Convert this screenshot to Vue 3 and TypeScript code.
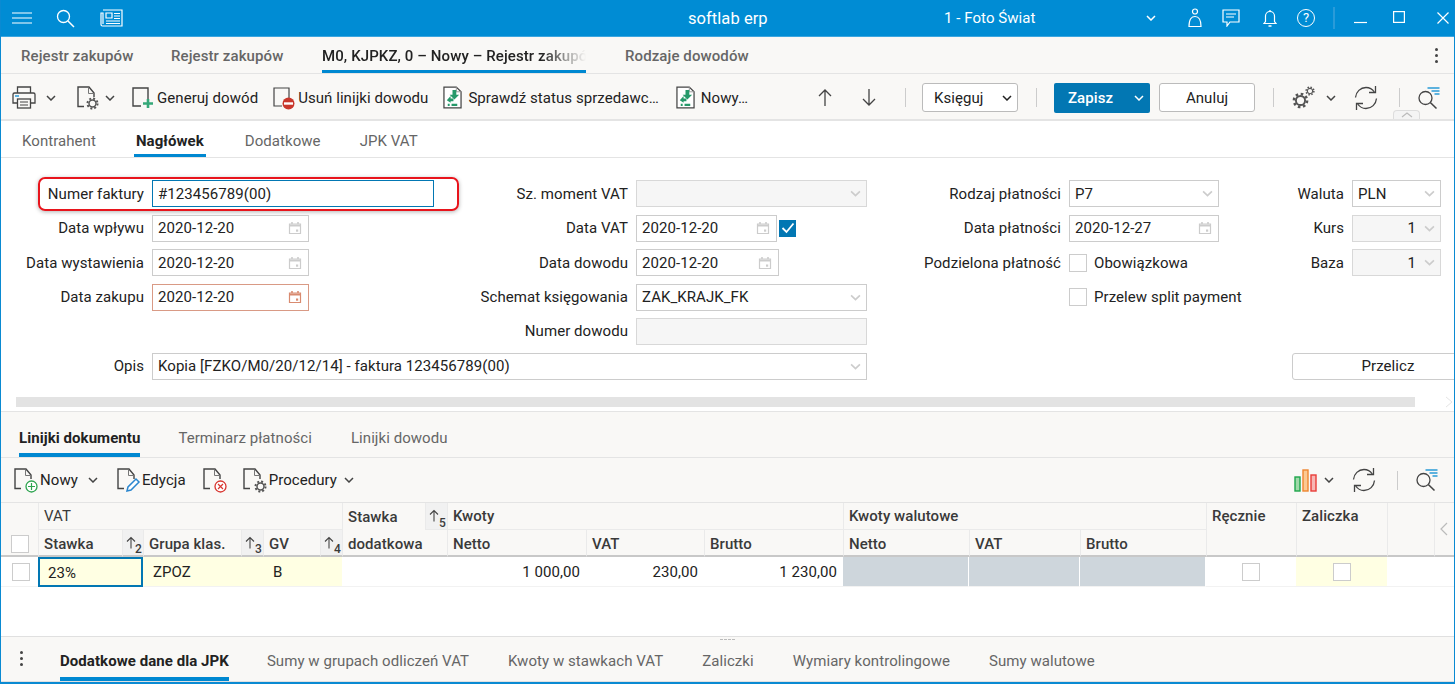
<script setup lang="ts">
interface Field { label?: string; kind: string; value?: string; r: number; c: number; extra?: string }
const fields: Field[] = [
  { label: 'Numer faktury', kind: 'focus', value: '#123456789(00)', r: 1, c: 1 },
  { label: 'Data wpływu', kind: 'date', value: '2020-12-20', r: 2, c: 1, extra: 'w157' },
  { label: 'Data wystawienia', kind: 'date', value: '2020-12-20', r: 3, c: 1, extra: 'w157' },
  { label: 'Data zakupu', kind: 'date', value: '2020-12-20', r: 4, c: 1, extra: 'w157 err' },
  { label: 'Opis', kind: 'sel', value: 'Kopia [FZKO/M0/20/12/14] - faktura 123456789(00)', r: 6, c: 1, extra: 'wide' },
  { label: 'Sz. moment VAT', kind: 'sel', value: '', r: 1, c: 3, extra: 'dis' },
  { label: 'Data dowodu', kind: 'date', value: '2020-12-20', r: 3, c: 3, extra: 'w143' },
  { label: 'Schemat księgowania', kind: 'sel', value: 'ZAK_KRAJK_FK', r: 4, c: 3 },
  { label: 'Numer dowodu', kind: 'text', value: '', r: 5, c: 3, extra: 'dis' },
  { label: 'Rodzaj płatności', kind: 'sel', value: 'P7', r: 1, c: 5 },
  { label: 'Data płatności', kind: 'date', value: '2020-12-27', r: 2, c: 5 },
  { label: 'Waluta', kind: 'sel', value: 'PLN', r: 1, c: 7 },
  { label: 'Kurs', kind: 'sel', value: '1', r: 2, c: 7, extra: 'dis num' },
  { label: 'Baza', kind: 'sel', value: '1', r: 3, c: 7, extra: 'dis num' },
]
const bottomTabs = ['Sumy w grupach odliczeń VAT', 'Kwoty w stawkach VAT', 'Zaliczki', 'Wymiary kontrolingowe', 'Sumy walutowe']
</script>

<template>
  <svg class="defs" aria-hidden="true">
    <symbol id="cal" viewBox="0 0 14 14">
      <path d="M1.500 3h11v9.500h-11z" fill="none" stroke="currentColor" stroke-width="1.200" />
      <path d="M1.500 4.500h11" stroke="currentColor" stroke-width="2" />
      <path d="M4 1v2M10 1v2" stroke="currentColor" stroke-width="1.600" />
      <rect x="8" y="8.500" width="2.200" height="2.200" fill="currentColor" />
    </symbol>
    <symbol id="chev" viewBox="0 0 10 6">
      <path d="M1 1l4 4 4-4" fill="none" stroke="currentColor" stroke-width="1.500" />
    </symbol>
    <symbol id="doc" viewBox="0 0 22 24">
      <path d="M7 20.500H1V1h11l5 6v4" fill="none" stroke="#444" stroke-width="1.400" />
      <path d="M11.500 1.500V7.500H17" fill="none" stroke="#777" stroke-width="1" />
    </symbol>
    <symbol id="gear" viewBox="0 0 16 16">
      <circle cx="8" cy="8" r="6.200" fill="none" stroke="#555" stroke-width="2.400" stroke-dasharray="2.430 2.440" />
      <circle cx="8" cy="8" r="4.300" fill="none" stroke="#555" stroke-width="1.800" />
    </symbol>
    <symbol id="reload" viewBox="0 0 24 24">
      <path d="M1.500 11.500C2 5.800 6.400 1.500 12 1.500c3.400 0 6.300 1.500 8.300 4.500" fill="none" stroke="#444" stroke-width="1.300" />
      <path d="M21.500 0v6.500H15" fill="none" stroke="#444" stroke-width="1.300" />
      <path d="M22.500 12.500c-.5 5.700-4.900 10-10.500 10-3.400 0-6.300-1.500-8.300-4.500" fill="none" stroke="#444" stroke-width="1.300" />
      <path d="M2.500 24v-6.500H9" fill="none" stroke="#444" stroke-width="1.300" />
    </symbol>
    <symbol id="find" viewBox="0 0 24 24">
      <circle cx="8.500" cy="12" r="6.500" fill="none" stroke="#444" stroke-width="1.300" />
      <path d="M13.300 16.500L19.500 22.500" stroke="#444" stroke-width="1.600" />
      <path d="M10.500 2h12M14.500 5h8M17.500 8h5" stroke="#2a9ad6" stroke-width="1.300" />
    </symbol>
    <symbol id="xferdoc" viewBox="0 0 20 24">
      <path d="M1 1h13l5 5v17H1z" fill="#fff" stroke="#444" stroke-width="1.300" />
      <path d="M14 1v5h5" fill="none" stroke="#999" />
      <path d="M10 4h4v5h3l-5 5-5-5h3z" fill="#26996a" />
      <path d="M4 15l4-4.500V13h3v3H8v1.500zM5 18.500h2v2.500H5zM9 18.500h6v2.500H9z" fill="#26996a" />
    </symbol>
    <symbol id="sort" viewBox="0 0 14 14">
      <path d="M5 12.500V1.500M1 5.500l4-4 4 4" fill="none" stroke="#444" stroke-width="1.100" />
    </symbol>
  </svg>

  <div class="window">
    <header class="title">
      <svg class="t-menu" width="20" height="12" viewBox="0 0 20 12"><path d="M0 1h20M0 6h20M0 11h20" stroke="#fff" stroke-width="1.200" /></svg>
      <svg class="t-search" width="19" height="19" viewBox="0 0 19 19"><circle cx="7.500" cy="7.500" r="6" fill="none" stroke="#fff" stroke-width="1.300" /><path d="M12 12l6 6" stroke="#fff" stroke-width="1.500" /></svg>
      <svg class="t-news" width="23" height="18" viewBox="0 0 23 18"><path d="M3 1h19v16H2.500A1.500 1.500 0 0 1 1 15.500V4h2v11" fill="none" stroke="#fff" stroke-width="1.200" /><path d="M6 4h6v5H6zM14 4.500h6M14 7h6M14 9.500h6M6 12h14M6 14.500h14" fill="none" stroke="#fff" stroke-width="1.200" /></svg>
      <span class="app">softlab erp</span>
      <span class="org">1 - Foto Świat</span>
      <svg class="t-chev" width="10" height="6"><use href="#chev" /></svg>
      <svg class="t-user" width="14" height="20" viewBox="0 0 14 20"><circle cx="7" cy="3.500" r="2.500" fill="none" stroke="#fff" stroke-width="1.200" /><path d="M1 18.500c0-8 3-10 6-10s6 2 6 10z" fill="none" stroke="#fff" stroke-width="1.200" /></svg>
      <svg class="t-chat" width="18" height="18" viewBox="0 0 18 18"><path d="M1 1h16v12H8l-3 4v-4H1z" fill="none" stroke="#fff" stroke-width="1.200" /><path d="M4 5h10M4 8h8" stroke="#fff" stroke-width="1.100" /></svg>
      <svg class="t-bell" width="14" height="18" viewBox="0 0 14 18"><path d="M1 14.500h12l-1.500-2V7a4.500 4.500 0 0 0-9 0v5.500z" fill="none" stroke="#fff" stroke-width="1.200" /><path d="M7 1v1.500M5.500 17h3" stroke="#fff" stroke-width="1.300" /></svg>
      <span class="t-help">?</span>
      <i class="t-sep"></i>
      <svg class="t-min" width="13" height="12" viewBox="0 0 13 12"><path d="M0 10.500h13" stroke="#fff" stroke-width="1.200" /></svg>
      <svg class="t-max" width="12" height="12" viewBox="0 0 12 12"><rect x=".6" y=".6" width="10.800" height="10.800" fill="none" stroke="#fff" stroke-width="1.200" /></svg>
      <svg class="t-close" width="12" height="12" viewBox="0 0 12 12"><path d="M.5.500l11 11M11.500.500l-11 11" stroke="#fff" stroke-width="1.200" /></svg>
    </header>

    <nav class="doc-tabs">
      <a class="dt w1">Rejestr zakupów</a>
      <a class="dt w2">Rejestr zakupów</a>
      <a class="dt active"><span class="fade">M0, KJPKZ, 0 – Nowy – Rejestr zakupów</span></a>
      <a class="dt w4">Rodzaje dowodów</a>
      <span class="kebab"><i></i><i></i><i></i></span>
    </nav>

    <section class="toolbar">
      <svg class="i-print" width="24" height="23" viewBox="0 0 24 23"><path d="M5.500 7V1h13v6M5.500 17H1V8.500A1.500 1.500 0 0 1 2.500 7h19A1.500 1.500 0 0 1 23 8.500V17h-4.500" fill="none" stroke="#444" stroke-width="1.300" /><rect x="5.500" y="13" width="13" height="9" fill="none" stroke="#444" stroke-width="1.300" /><path d="M8 16h8M8 19h8" stroke="#444" /><path d="M3 10h4" stroke="#2a9ad6" stroke-width="1.500" /></svg>
      <svg class="chv cv1" width="10" height="6"><use href="#chev" /></svg>
      <span class="i-docgear"><svg width="22" height="24"><use href="#doc" /></svg><svg class="ov-gear" width="13" height="13"><use href="#gear" /></svg></span>
      <svg class="chv cv2" width="10" height="6"><use href="#chev" /></svg>
      <button class="tb b-gen"><svg width="22" height="24" viewBox="0 0 22 24"><path d="M9 20H1V2h15v11" fill="none" stroke="#444" stroke-width="1.400" /><path d="M16 13v9M11 17.500h10" stroke="#35a878" stroke-width="2.600" /></svg>Generuj dowód</button>
      <button class="tb b-del"><svg width="22" height="24" viewBox="0 0 22 24"><path d="M9 20H1V2h15v10" fill="none" stroke="#444" stroke-width="1.200" /><circle cx="15.500" cy="17.500" r="6" fill="#c9372c" /><path d="M11 17.500h9" stroke="#fff" stroke-width="2.400" /></svg>Usuń linijki dowodu</button>
      <button class="tb b-chk"><svg width="19" height="23"><use href="#xferdoc" /></svg>Sprawdź status sprzedawc…</button>
      <button class="tb b-new"><svg width="19" height="23"><use href="#xferdoc" /></svg>Nowy…</button>
      <svg class="arrow a1" width="14" height="17" viewBox="0 0 14 17"><path d="M7 17V1M1 7l6-6 6 6" fill="none" stroke="#444" stroke-width="1.300" /></svg>
      <svg class="arrow a2" width="14" height="17" viewBox="0 0 14 17"><path d="M7 0v16M1 10l6 6 6-6" fill="none" stroke="#444" stroke-width="1.300" /></svg>
      <i class="sep s1"></i>
      <div class="post"><span>Księguj</span><svg width="10" height="6"><use href="#chev" /></svg></div>
      <i class="sep s2"></i>
      <button class="save"><span>Zapisz</span><svg width="10" height="6"><use href="#chev" /></svg></button>
      <button class="cancel">Anuluj</button>
      <i class="sep s3"></i>
      <span class="i-gears"><svg class="g1" width="17" height="17"><use href="#gear" /></svg><svg class="g2" width="10" height="10"><use href="#gear" /></svg></span>
      <svg class="chv cv3" width="10" height="6"><use href="#chev" /></svg>
      <svg class="rl1" width="24" height="24"><use href="#reload" /></svg>
      <i class="sep s4"></i>
      <svg class="fnd f1" width="24" height="24"><use href="#find" /></svg>
      <span class="collapse"><svg width="12" height="6" viewBox="0 0 12 6"><path d="M1 5l5-4 5 4" fill="none" stroke="#bbb" stroke-width="1.200" /></svg></span>
    </section>

    <nav class="form-tabs">
      <a class="ft f-a">Kontrahent</a>
      <a class="ft f-b active">Nagłówek</a>
      <a class="ft f-c">Dodatkowe</a>
      <a class="ft f-d">JPK VAT</a>
    </nav>

    <section class="form">
      <i class="hl"></i>
      <template v-for="f in fields" :key="f.label">
        <label class="lbl" :class="['r' + f.r, 'lc' + f.c]">{{ f.label }}</label>
        <div class="ctl" :class="['r' + f.r, 'cc' + f.c, f.kind, f.extra]">
          <span class="val">{{ f.value }}</span>
          <svg v-if="f.kind === 'date'" class="cal" width="14" height="14"><use href="#cal" /></svg>
          <svg v-if="f.kind === 'sel'" class="sc" width="11" height="7"><use href="#chev" /></svg>
        </div>
      </template>

      <div class="vatdate">
        <span class="lbl inner">Data VAT</span>
        <div class="ctl date w141"><span class="val">2020-12-20</span><svg class="cal" width="14" height="14"><use href="#cal" /></svg></div>
        <span class="checked"><svg width="14" height="12" viewBox="0 0 14 12"><path d="M1.500 6l4 4 7-8.500" fill="none" stroke="#fff" stroke-width="1.800" /></svg></span>
      </div>
      <label class="lbl r3 lc5">Podzielona płatność</label>
      <div class="chk r3 cc5"><i class="box"></i>Obowiązkowa</div>
      <div class="chk r4 cc5"><i class="box"></i>Przelew split payment</div>
      <button class="recalc">Przelicz</button>
      <div class="hscroll"><i class="thumb"></i><svg width="8" height="12" viewBox="0 0 8 12"><path d="M1 1l6 5-6 5" fill="none" stroke="#e5e5e5" /></svg></div>
    </section>

    <nav class="line-tabs">
      <a class="lt l-a active">Linijki dokumentu</a>
      <a class="lt l-b">Terminarz płatności</a>
      <a class="lt l-c">Linijki dowodu</a>
    </nav>

    <section class="subbar">
      <span class="sb s-new"><span class="ic"><svg width="22" height="24"><use href="#doc" /></svg><svg class="ov" width="13" height="13" viewBox="0 0 13 13"><circle cx="6.500" cy="6.500" r="5.500" fill="#fff" stroke="#2ea44f" stroke-width="1.300" /><path d="M6.500 3v7M3 6.500h7" stroke="#2ea44f" stroke-width="1.200" /></svg></span>Nowy<svg class="sbc" width="10" height="6"><use href="#chev" /></svg></span>
      <span class="sb s-edit"><span class="ic"><svg width="22" height="24"><use href="#doc" /></svg><svg class="ov" width="16" height="16" viewBox="0 0 16 16"><path d="M2 14l1-4L11 2l3 3-8 8z" fill="#fff" stroke="#2a86cf" stroke-width="1.500" /></svg></span>Edycja</span>
      <span class="sb s-del"><span class="ic"><svg width="22" height="24"><use href="#doc" /></svg><svg class="ov" width="13" height="13" viewBox="0 0 13 13"><circle cx="6.500" cy="6.500" r="5.500" fill="#fff" stroke="#d8352f" stroke-width="1.300" /><path d="M4 4l5 5M9 4l-5 5" stroke="#d8352f" stroke-width="1.200" /></svg></span></span>
      <span class="sb s-proc"><span class="ic"><svg width="22" height="24"><use href="#doc" /></svg><svg class="ov" width="13" height="13"><use href="#gear" /></svg></span>Procedury<svg class="sbc" width="10" height="6"><use href="#chev" /></svg></span>
      <svg class="bars" width="24" height="23" viewBox="0 0 24 23"><rect x="1" y="8" width="5" height="14" fill="#9fd8a9" stroke="#1ea64b" stroke-width="1.400" /><rect x="9" y="1" width="5" height="21" fill="#fbc993" stroke="#ee8630" stroke-width="1.400" /><rect x="17" y="6" width="5" height="16" fill="#f7b7b5" stroke="#e93c38" stroke-width="1.400" /></svg>
      <svg class="chv bc" width="10" height="6"><use href="#chev" /></svg>
      <svg class="rl2" width="24" height="24"><use href="#reload" /></svg>
      <i class="sep s5"></i>
      <svg class="fnd f2" width="24" height="24"><use href="#find" /></svg>
    </section>

    <section class="grid">
      <div class="gh selh"><i class="box"></i></div>
      <div class="gh g-vat">VAT</div>
      <div class="gh g-st">Stawka</div>
      <div class="gh srt sr1"><svg width="14" height="14"><use href="#sort" /></svg><sub>5</sub></div>
      <div class="gh g-kw">Kwoty</div>
      <div class="gh g-kww">Kwoty walutowe</div>
      <div class="gh g-rc">Ręcznie</div>
      <div class="gh g-za">Zaliczka</div>
      <div class="gh g-em"></div>
      <div class="gh g-ar"><svg width="8" height="14" viewBox="0 0 8 14"><path d="M7 1L1 7l6 6" fill="none" stroke="#bbb" stroke-width="1.200" /></svg></div>

      <div class="gh low h2">Stawka</div>
      <div class="gh srt low h3"><svg width="14" height="14"><use href="#sort" /></svg><sub>2</sub></div>
      <div class="gh low h4">Grupa klas.</div>
      <div class="gh srt low h5"><svg width="14" height="14"><use href="#sort" /></svg><sub>3</sub></div>
      <div class="gh low h6">GV</div>
      <div class="gh srt low h7"><svg width="14" height="14"><use href="#sort" /></svg><sub>4</sub></div>
      <div class="gh low h8">dodatkowa</div>
      <div class="gh low h10">Netto</div>
      <div class="gh low h11">VAT</div>
      <div class="gh low h12">Brutto</div>
      <div class="gh low h13">Netto</div>
      <div class="gh low h14">VAT</div>
      <div class="gh low h15">Brutto</div>

      <div class="gc d1"><i class="box"></i></div>
      <div class="gc d2">23%</div>
      <div class="gc d3">ZPOZ</div>
      <div class="gc d4">B</div>
      <div class="gc d5"></div>
      <div class="gc d6 right">1 000,00</div>
      <div class="gc d7 right">230,00</div>
      <div class="gc d8 right">1 230,00</div>
      <div class="gc d9 grey"></div>
      <div class="gc d10 grey"></div>
      <div class="gc d11 grey"></div>
      <div class="gc d12 center"><i class="box"></i></div>
      <div class="gc d13 center yel"><i class="box"></i></div>
      <div class="gc d14"></div>
    </section>

    <div class="spacer"></div>

    <nav class="bottom">
      <i class="grip"></i>
      <span class="kebab k2"><i></i><i></i><i></i></span>
      <a class="bt active">Dodatkowe dane dla JPK</a>
      <a v-for="t in bottomTabs" :key="t" class="bt">{{ t }}</a>
    </nav>
  </div>
</template>

<style>
html, body { margin: 0; background: #fff; overflow: hidden; }
</style>

<style scoped>
.defs { display: none; }
.window {
  position: relative;
  width: 1455px; height: 684px; box-sizing: border-box; overflow: hidden;
  display: flex; flex-direction: column;
  border: solid #0a8ad2; border-width: 0 1px 2px 1px;
  font-family: Roboto, "Liberation Sans", sans-serif; font-size: 15px; letter-spacing: .06px; color: #222; background: #fff;
}
a { display: block; }
button { font: inherit; color: inherit; background: none; border: 0; padding: 0; letter-spacing: inherit; }
svg { display: block; flex: none; }
i { display: block; }

.title { height: 37px; flex: none; box-sizing: border-box; background: #008cd4; border-bottom: 1px solid #3ba6e0; display: flex; align-items: center; color: #fff; }
.t-menu { margin-left: 11px; }
.t-search { margin-left: 24px; }
.t-news { margin-left: 25px; }
.app { margin-left: 565px; width: 80px; font-size: 16.500px; white-space: nowrap; }
.org { margin-left: 176px; width: 92px; font-size: 15px; white-space: nowrap; }
.t-chev { margin-left: 110px; color: #fff; }
.t-user { margin-left: 32px; }
.t-chat { margin-left: 20px; }
.t-bell { margin-left: 23px; }
.t-help { margin-left: 20px; width: 16px; height: 16px; border: 1.200px solid #fff; border-radius: 50%; font-size: 13px; line-height: 16px; text-align: center; }
.t-sep { margin-left: 18px; width: 2px; height: 22px; background: #2a9bd9; }
.t-min { margin-left: 19px; }
.t-max { margin-left: 26px; margin-top: -2px; }
.t-close { margin-left: 32px; }

.doc-tabs { height: 37px; flex: none; box-sizing: border-box; background: #f9f8f6; border-bottom: 1px solid #e4e4e4; display: flex; position: relative; font-weight: 500; letter-spacing: .1px; color: #666; line-height: 38px; }
.dt { white-space: nowrap; }
.w1 { margin-left: 20px; width: 150px; }
.w2 { width: 151px; }
.dt.active { width: 264px; margin-right: 39px; height: 36px; box-sizing: border-box; border-bottom: 3px solid #0088d1; color: #222; overflow: hidden; }
.fade { display: block; width: 264px; overflow: hidden; -webkit-mask-image: linear-gradient(90deg, #000 83%, transparent 100%); mask-image: linear-gradient(90deg, #000 83%, transparent 100%); }
.kebab { margin-left: auto; margin-right: 16px; display: flex; flex-direction: column; justify-content: center; gap: 3px; }
.kebab i { width: 3px; height: 3px; border-radius: 50%; background: #444; }

.toolbar { height: 47px; flex: none; box-sizing: border-box; padding-top: 2px; background: #f9f8f6; border-bottom: 2px solid #e4e4e4; display: flex; align-items: center; position: relative; color: #222; }
.i-print { margin-left: 11px; }
.chv { color: #444; }
.cv1 { margin-left: 10px; }
.i-docgear { margin-left: 21px; width: 22px; height: 24px; position: relative; }
.ov-gear { position: absolute; right: 0; bottom: 0; }
.cv2 { margin-left: 6px; }
.tb { display: flex; align-items: center; white-space: nowrap; }
.b-gen { margin-left: 17px; gap: 3px; }
.b-del { margin-left: 15px; gap: 3px; }
.b-chk { margin-left: 15px; gap: 6px; }
.b-new { margin-left: 17px; gap: 6px; }
.arrow { margin-top: -1px; }
.a1 { margin-left: 70px; }
.a2 { margin-left: 30px; }
.sep { width: 1px; height: 19px; background: #ccc; }
.s1 { margin-left: 29px; }
.post { margin-left: 16px; width: 96px; height: 29px; box-sizing: border-box; border: 1px solid #bbb; border-radius: 3px; background: #fff; display: flex; align-items: center; justify-content: space-between; padding: 0 5px 0 11px; color: #222; }
.s2 { margin-left: 18px; }
.save { margin-left: 17px; width: 96px; height: 30px; background: #0277b3; border-radius: 2px; color: #fff; display: flex; align-items: center; justify-content: space-between; padding: 0 6px 0 14px; box-sizing: border-box; font-weight: 500; }
.save svg { color: #fff; }
.cancel { margin-left: 9px; width: 96px; height: 29px; box-sizing: border-box; background: #fff; border: 1px solid #bbb; border-radius: 3px; }
.s3 { margin-left: 18px; }
.i-gears { margin-left: 18px; width: 23px; height: 23px; position: relative; }
.g1 { position: absolute; left: 0; bottom: 0; }
.g2 { position: absolute; right: 0; top: 0; }
.cv3 { margin-left: 11px; }
.rl1 { margin-left: 18px; }
.s4 { margin-left: 21px; }
.f1 { margin-left: 17px; }
.collapse { position: absolute; right: 34px; bottom: 0; width: 27px; height: 9px; box-sizing: border-box; border: 1px solid #ddd; border-bottom: 0; border-radius: 4px 4px 0 0; background: #f4f4f4; display: flex; align-items: center; justify-content: center; }

.form-tabs { height: 37px; flex: none; box-sizing: border-box; display: flex; border-bottom: 1px solid #e4e4e4; line-height: 41px; color: #666; }
.ft { white-space: nowrap; height: 36px; box-sizing: border-box; }
.ft.active { color: #222; font-weight: 700; border-bottom: 3px solid #0088d1; padding: 0 2px; }
.f-a { margin-left: 21px; }
.f-b { margin-left: 38px; }
.f-c { margin-left: 39px; }
.f-d { margin-left: 39px; }

.form {
  height: 254px; flex: none; box-sizing: border-box; padding-top: 22px; position: relative;
  display: grid;
  grid-template-columns: 143px 318px 150px 231px 186px 150px 117px 89px;
  column-gap: 8px;
  grid-template-rows: repeat(6, 27px);
  row-gap: 7.500px;
  align-content: start;
  border-bottom: 1px solid #e4e4e4;
}
.hl { position: absolute; left: 37px; top: 19px; width: 421px; height: 34px; box-sizing: border-box; border: 2px solid #e8141c; border-radius: 7px; box-shadow: 0 1px 4px rgba(0,0,0,.3); }
.lbl { display: flex; align-items: center; justify-content: flex-end; white-space: nowrap; margin-top: -1px; }
.lbl.r1, .lbl.r3 { margin-top: 0; }
.r1 { grid-row: 1; } .r2 { grid-row: 2; } .r3 { grid-row: 3; } .r4 { grid-row: 4; } .r5 { grid-row: 5; } .r6 { grid-row: 6; }
.lc1 { grid-column: 1; } .lc3 { grid-column: 3; } .lc5 { grid-column: 5; } .lc7 { grid-column: 7; }
.cc1 { grid-column: 2; } .cc3 { grid-column: 4; } .cc5 { grid-column: 6; } .cc7 { grid-column: 8; }
.ctl { box-sizing: border-box; height: 27px; border: 1px solid #ccc; background: #fff; display: flex; align-items: center; justify-content: space-between; padding: 0 5px; position: relative; }
.focus { width: 282px; border: 1px solid #0277b3; z-index: 1; }
.w157 { width: 157px; } .w143 { width: 143px; } .w141 { width: 141px; }
.wide { grid-column: 2 / 5; }
.dis { background: #f6f6f6; border-color: #d8d8d8; }
.err { border-color: #d99a85; }
.err .cal { color: #d98b70; }
.cal { color: #ccc; margin-right: 1px; }
.sc { color: #ccc; margin-left: auto; }
.num .val { margin-left: auto; margin-right: 8px; }
.num .sc { margin-left: 0; }
.vatdate { grid-row: 2; grid-column: 3 / 5; display: grid; grid-template-columns: 150px 141px 18px; column-gap: 8px; align-items: center; }
.inner { grid-column: 1; }
.checked { margin-left: -6px; width: 17px; height: 17px; background: #0277b3; display: flex; align-items: center; justify-content: center; }
.chk { display: flex; align-items: center; gap: 7px; white-space: nowrap; }
.box { width: 16px; height: 16px; border: 1px solid #ccc; background: #fff; flex: none; }
.recalc { grid-row: 6; grid-column: 7 / 9; margin-left: 65px; width: 178px; height: 27px; box-sizing: border-box; background: #fff; border: 1px solid #ccc; border-radius: 3px; padding-left: 14px; }
.hscroll { position: absolute; left: 15px; top: 239px; width: 1437px; display: flex; justify-content: space-between; align-items: center; height: 10px; }
.thumb { width: 1399px; height: 10px; background: #e3e3e3; }

.line-tabs { height: 46px; flex: none; box-sizing: border-box; background: #f9f8f6; display: flex; border-bottom: 1px solid #e4e4e4; line-height: 52px; color: #666; }
.lt { white-space: nowrap; height: 45px; box-sizing: border-box; }
.lt.active { color: #222; font-weight: 700; border-bottom: 4px solid #0088d1; }
.l-a { margin-left: 18px; }
.l-b { margin-left: 38px; }
.l-c { margin-left: 39px; }

.subbar { height: 45px; flex: none; box-sizing: border-box; background: #f9f8f6; border-bottom: 1px solid #e4e4e4; display: flex; align-items: center; color: #222; }
.sb { display: flex; align-items: center; white-space: nowrap; }
.ic { width: 22px; height: 24px; position: relative; margin-right: 4px; }
.ov { position: absolute; right: -2px; bottom: -1px; }
.s-new { margin-left: 13px; }
.sbc { color: #444; }
.s-new .sbc { margin-left: 10px; }
.s-edit { margin-left: 19px; }
.s-edit .ic { margin-right: 3px; }
.s-del { margin-left: 17px; }
.s-proc { margin-left: 14px; }
.s-proc .sbc { margin-left: 7px; }
.bars { margin-left: 940px; }
.bc { margin-left: 6px; }
.rl2 { margin-left: 18px; }
.s5 { margin-left: 21px; }
.f2 { margin-left: 17px; }

.grid {
  display: grid; flex: none;
  grid-template-columns: 37px 84px 21px 98px 22px 57px 22px 83px 22px 139px 118px 139px 126px 111px 126px 90px 91px 47px 20px;
  grid-template-rows: 27px 27px 30px;
  color: #222;
}
.gh { background: #f9f8f6; display: flex; align-items: center; padding-left: 5px; white-space: nowrap; box-sizing: border-box; border-left: 1px solid #eaeaea; border-bottom: 1px solid #eaeaea; font-weight: 500; color: #3a3a3a; position: relative; }
.selh { grid-column: 1; grid-row: 1 / 3; border: 0; border-bottom: 2px solid #c8c8c8; align-items: flex-end; padding: 0 0 2px 10px; }
.g-vat { grid-column: 2 / 8; grid-row: 1; font-weight: 400; }
.g-st { grid-column: 8; grid-row: 1; border-bottom: 0; }
.sr1 { grid-column: 9; grid-row: 1; }
.g-kw { grid-column: 10 / 13; grid-row: 1; }
.g-kww { grid-column: 13 / 16; grid-row: 1; }
.g-rc, .g-za, .g-em, .g-ar { grid-row: 1 / 3; border-bottom: 2px solid #c8c8c8; align-items: flex-start; padding-top: 4px; }
.g-rc { grid-column: 16; } .g-za { grid-column: 17; } .g-em { grid-column: 18; }
.g-ar { grid-column: 19; padding: 19px 0 0 5px; }
.low { grid-row: 2; border-bottom: 2px solid #c8c8c8; padding-top: 2px; }
.h2 { grid-column: 2; } .h3 { grid-column: 3; } .h4 { grid-column: 4; } .h5 { grid-column: 5; } .h6 { grid-column: 6; } .h7 { grid-column: 7; }
.h8 { grid-column: 8 / 10; border-left: 1px solid #eaeaea; }
.h10 { grid-column: 10; } .h11 { grid-column: 11; } .h12 { grid-column: 12; } .h13 { grid-column: 13; } .h14 { grid-column: 14; } .h15 { grid-column: 15; }
.srt { background: #f1f1f1; padding: 0 0 0 3px; }
.srt sub { position: absolute; right: 1px; bottom: 0; font-size: 12px; line-height: 12px; }
.gc { grid-row: 3; display: flex; align-items: center; background: #fff; box-sizing: border-box; height: 30px; padding-top: 1px; border-bottom: 1px solid #f2f2f2; padding-left: 10px; white-space: nowrap; }
.d1 { grid-column: 1; padding-left: 11px; }
.d2 { grid-column: 2 / 4; background: #ffffe3; border: 2px solid #0277b3; padding-left: 8px; }
.d3 { grid-column: 4 / 6; background: #ffffe3; }
.d4 { grid-column: 6 / 8; background: #ffffe3; }
.d5 { grid-column: 8 / 10; }
.d6 { grid-column: 10; } .d7 { grid-column: 11; } .d8 { grid-column: 12; }
.d9 { grid-column: 13; } .d10 { grid-column: 14; } .d11 { grid-column: 15; }
.d12 { grid-column: 16; } .d13 { grid-column: 17; } .d14 { grid-column: 18 / 20; }
.right { justify-content: flex-end; padding: 1px 6px 0 0; }
.grey { background: #ced6dc; border-right: 1px solid #fff; }
.center { justify-content: center; padding: 0; }
.yel { background: #ffffe3; }

.spacer { flex: 1; }
.bottom { height: 46px; flex: none; box-sizing: border-box; background: #f9f8f6; border-top: 1px solid #e0e0e0; border-bottom: 1px solid #e0e0e0; display: flex; position: relative; line-height: 48px; color: #666; }
.grip { position: absolute; left: 719px; top: 2px; width: 15px; height: 0; border-top: 1px dashed #bbb; }
.k2 { margin: -2px 0 0 19px; }
.bt { white-space: nowrap; margin-left: 39px; height: 44px; box-sizing: border-box; }
.bt.active { margin-left: 37px; color: #222; font-weight: 700; border-bottom: 4px solid #0088d1; }
.bt.active + .bt { margin-left: 38px; }
</style>
